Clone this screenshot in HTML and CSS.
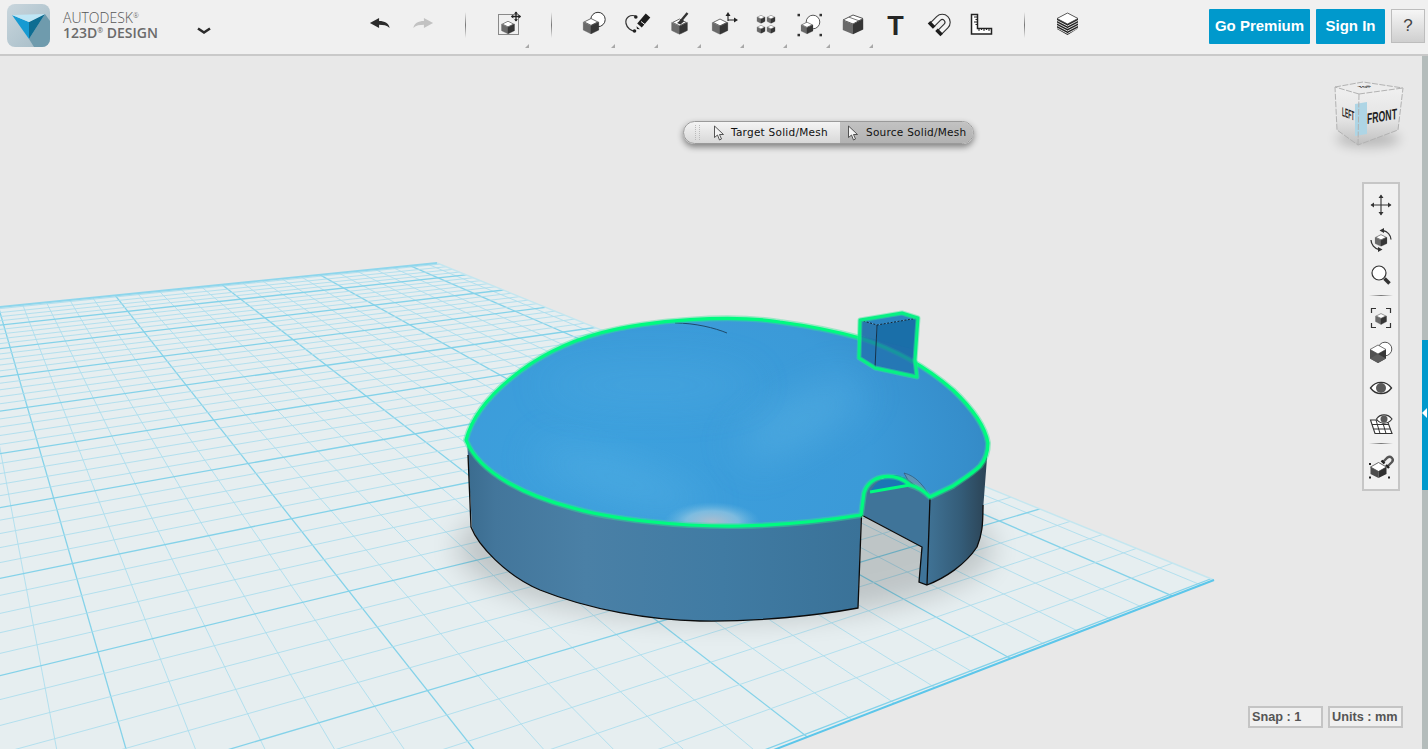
FILE: index.html
```html
<!DOCTYPE html>
<html lang="en">
<head>
<meta charset="utf-8">
<title>Autodesk 123D Design</title>
<link rel="stylesheet" href="styles.css">
</head>
<body>
<svg class="defs" width="0" height="0" aria-hidden="true">
  <defs>
    <symbol id="cube" viewBox="0 0 20 20">
      <path d="M10 1.800 18 5.800 10 9.800 2 5.800Z" fill="#fff" stroke="#555" stroke-width="1" stroke-linejoin="round"/>
      <path d="M.8 5.800 10 10.200V19.800L.8 15.200Z" fill="#6a6a6a" stroke="#6a6a6a" stroke-width=".6" stroke-linejoin="round"/>
      <path d="M19.200 5.800 10 10.200V19.800L19.200 15.200Z" fill="#363636" stroke="#363636" stroke-width=".6" stroke-linejoin="round"/>
    </symbol>
    <symbol id="undo" viewBox="0 0 22 12">
      <path d="M0 5.500 10 0V3.200C16 3.200 21 5.500 21.500 11 18.500 8 14.500 7.400 10 7.400V11Z" fill="currentColor"/>
    </symbol>
  </defs>
</svg>

<header class="topbar">
  <div class="brand">
    <svg class="logo" width="43" height="43" viewBox="0 0 43 43">
      <defs>
        <linearGradient id="logoBg" x1="0" y1="0" x2="1" y2="1"><stop offset="0" stop-color="#c9d6dd"/><stop offset="1" stop-color="#a4bbc6"/></linearGradient>
      </defs>
      <rect width="43" height="43" rx="8" fill="url(#logoBg)"/>
      <path d="M38 10 43 17V35A8 8 0 0 1 35 43H27L22 35Z" fill="#6f9bad"/>
      <path d="M5 11 22 18 22 35Z" fill="#169ad2"/>
      <path d="M38 10 22 18 22 35Z" fill="#0e6d92"/>
      <path d="M5 11 38 10 22 18Z" fill="#bfe6f5"/>
    </svg>
    <div class="brand-text">
      <div class="brand-line1">AUTODESK<sup>®</sup></div>
      <div class="brand-line2">123D<sup>®</sup> DESIGN</div>
    </div>
    <svg class="chevron" width="16" height="8" viewBox="0 0 16 8"><path d="M2 1.500 8 5.500 14 1.500" fill="none" stroke="#2b2b2b" stroke-width="2.600"/></svg>
  </div>

  <button class="tool">
    <svg class="ic" viewBox="0 0 31 30"><use href="#undo" x="5" y="6" width="22" height="11" class="dark"/></svg>
  </button>
  <button class="tool">
    <svg class="ic" viewBox="0 0 31 30"><g transform="translate(27 6) scale(-1 1)"><use href="#undo" width="22" height="11" class="faded"/></g></svg>
  </button>
  <span class="sep"></span>

  <button class="tool has-caret">
    <svg class="ic" viewBox="0 0 31 30">
      <rect x="5.500" y="2.500" width="20" height="20" fill="none" stroke="#222" stroke-dasharray="1 1"/>
      <use href="#cube" x="8" y="8" width="14" height="14"/>
      <path d="M23 0V9M18.500 4.500H27.500" stroke="#222" stroke-width="1.300"/>
      <path d="M23-.5 21 1.800H25ZM23 9.500 21 7.200H25ZM18 4.500 20.300 2.500V6.500ZM28 4.500 25.700 2.500V6.500Z" fill="#222"/>
    </svg>
  </button>
  <span class="sep"></span>

  <button class="tool has-caret">
    <svg class="ic" viewBox="0 0 31 30">
      <circle cx="19" cy="7.500" r="7.200" fill="#fff" stroke="#333" stroke-width="1"/>
      <use href="#cube" x="3.500" y="5" width="17" height="17"/>
    </svg>
  </button>
  <button class="tool has-caret">
    <svg class="ic" viewBox="0 0 31 30">
      <path d="M14.500 4.500C8 1.500 3 6 4 11.500 5 16 9 19 13.500 19" fill="none" stroke="#333" stroke-width="1.200"/>
      <circle cx="13.800" cy="5" r="1.800" fill="#222"/><circle cx="12.500" cy="19" r="1.800" fill="#222"/>
      <path d="M26 3.500 17.500 13.500" stroke="#1d1d1d" stroke-width="6"/>
      <path d="M15 17 14.500 14.300 18 17.200Z" fill="#1d1d1d"/>
      <path d="M19 9.500 23.500 13" stroke="#f0f0f0" stroke-width="1"/>
    </svg>
  </button>
  <button class="tool has-caret">
    <svg class="ic" viewBox="0 0 31 30"><g transform="translate(1 0)">
      <use href="#cube" x="5" y="5.500" width="17" height="17"/>
      <path d="M21.500 1 14 10" stroke="#333" stroke-width="2.400"/>
      <path d="M16.500 6.500 11 11 14.500 12.500 18 9.500Z" fill="#333"/>
    </g></svg>
  </button>
  <button class="tool has-caret">
    <svg class="ic" viewBox="0 0 31 30"><g transform="translate(1 0)">
      <use href="#cube" x="2.500" y="5.500" width="17" height="17"/>
      <path d="M19 9V2M19 8H27" stroke="#222" stroke-width="1.100" fill="none"/>
      <path d="M19 0 16.500 4H21.500ZM29 8 25 5.500V10.500Z" fill="#222"/>
    </g></svg>
  </button>
  <button class="tool has-caret">
    <svg class="ic" viewBox="0 0 31 30">
      <use href="#cube" x="5.500" y="2.500" width="9" height="9"/><use href="#cube" x="15.500" y="2.500" width="9" height="9"/>
      <use href="#cube" x="5.500" y="12.500" width="9" height="9"/><use href="#cube" x="15.500" y="12.500" width="9" height="9"/>
    </svg>
  </button>
  <button class="tool has-caret">
    <svg class="ic" viewBox="0 0 31 30"><g transform="translate(1 0)">
      <circle cx="18" cy="10" r="6.800" fill="#fff" stroke="#444" stroke-width=".9"/>
      <use href="#cube" x="5.500" y="8.500" width="13" height="14"/>
      <rect x="2.500" y="1.800" width="2.500" height="2.500" fill="#333"/><rect x="24.500" y="1.800" width="2.500" height="2.500" fill="#333"/>
      <rect x="2.500" y="21.800" width="2.500" height="2.500" fill="#333"/><rect x="24.500" y="21.800" width="2.500" height="2.500" fill="#333"/>
    </g></svg>
  </button>
  <button class="tool has-caret">
    <svg class="ic" viewBox="0 0 31 30"><g transform="translate(1 0)">
      <path d="M5 8 15 3 25 6.500 15 12Z" fill="#fff" stroke="#555" stroke-linejoin="round"/>
      <path d="M11 5.200 21 8.800" stroke="#555" stroke-width=".8"/>
      <path d="M4.800 8.200 15 12.200V22.300L4.800 18Z" fill="#6a6a6a"/>
      <path d="M25.200 6.800 15 12.200V22.300L25.200 17.500Z" fill="#363636"/>
    </g></svg>
  </button>
  <button class="tool"><span class="t-glyph">T</span></button>
  <button class="tool">
    <svg class="ic" viewBox="0 0 31 30">
      <path d="M9 13 15.500 6.500A5.300 5.300 0 0 1 23 14L16.500 20.500" fill="none" stroke="#333" stroke-width="6.400"/>
      <path d="M9 13 15.500 6.500A5.300 5.300 0 0 1 23 14L16.500 20.500" fill="none" stroke="#f4f4f4" stroke-width="4.200"/>
      <path d="M6 10.300 11.200 15.500M13.500 17.800 18.700 23" stroke="#1d1d1d" stroke-width="3.600"/>
    </svg>
  </button>
  <button class="tool">
    <svg class="ic" viewBox="0 0 31 30">
      <path d="M5.500 2.500H11.500V16.500H25.500V22H5.500Z" fill="#fff" stroke="#222" stroke-width="1.500"/>
      <path d="M8 5H11M9.500 7.500H11M8 10H11M9.500 12.500H11M13 19V16.500M15.500 18V16.500M18 19V16.500M20.500 18V16.500M23 19V16.500" stroke="#222" stroke-width="1"/>
    </svg>
  </button>
  <span class="sep"></span>
  <button class="tool">
    <svg class="ic" viewBox="0 0 31 30">
      <path d="M15.500 1 26 6.500V16.500L15.500 23 5 17V6.500Z" fill="#222"/>
      <path d="M5 8.500 15.500 14 26 8.500M5 11 15.500 16.500 26 11M5 13.500 15.500 19 26 13.500M5 16 15.500 21.500 26 16" fill="none" stroke="#eee" stroke-width=".9"/>
      <path d="M15.500 1 26 6.500 15.500 12 5 6.500Z" fill="#fff" stroke="#444" stroke-width=".8"/>
    </svg>
  </button>

  <div class="account">
    <a class="cta">Go Premium</a>
    <a class="cta">Sign In</a>
    <button class="help">?</button>
  </div>
</header>

<main class="viewport">
  <svg class="scene" width="1428" height="693" viewBox="0 56 1428 693">
    <defs>
      <clipPath id="planeClip"><path d="M-300 337 437 263 1214 580-300 1163Z"/></clipPath>
      <filter id="blur14" x="-30%" y="-60%" width="160%" height="220%"><feGaussianBlur stdDeviation="14"/></filter>
      <filter id="blur20" x="-50%" y="-80%" width="200%" height="260%"><feGaussianBlur stdDeviation="20"/></filter>
      <filter id="blur6" x="-50%" y="-100%" width="200%" height="300%"><feGaussianBlur stdDeviation="6"/></filter>
      <linearGradient id="wallFront" gradientUnits="userSpaceOnUse" x1="468" y1="0" x2="860" y2="0">
        <stop offset="0" stop-color="#3b6c8f"/><stop offset=".07" stop-color="#43769b"/><stop offset=".3" stop-color="#4a80a6"/><stop offset=".65" stop-color="#407ba3"/><stop offset="1" stop-color="#3a7298"/>
      </linearGradient>
      <linearGradient id="wallRight" gradientUnits="userSpaceOnUse" x1="930" y1="0" x2="986" y2="0">
        <stop offset="0" stop-color="#3f7193"/><stop offset=".55" stop-color="#345c78"/><stop offset="1" stop-color="#2c4456"/>
      </linearGradient>
      <radialGradient id="domeFill" gradientUnits="userSpaceOnUse" cx="610" cy="455" r="420" gradientTransform="translate(0 150) scale(1 .67)">
        <stop offset="0" stop-color="#3da1de"/><stop offset=".62" stop-color="#3b9ad8"/><stop offset=".85" stop-color="#368ecb"/><stop offset="1" stop-color="#3283bd"/>
      </radialGradient>
      <radialGradient id="glow"><stop offset="0" stop-color="#d9c8c8" stop-opacity=".72"/><stop offset=".55" stop-color="#bcd8e4" stop-opacity=".5"/><stop offset="1" stop-color="#7cc4e4" stop-opacity="0"/></radialGradient>
      <clipPath id="domeClip"><path d="M466 440C476 400 530 352 600 333 650 320 730 314 780 322 810 326 835 331 860 338 900 351 930 370 953 390 972 408 985 425 988 443 988 452 985 460 980 466 972 474 960 481 953 486L930 497C922 489 918 483 908 479 896 472 870 476 864 493L861 515C830 520 790 525 740 526 680 527 610 519 573 508 530 497 480 475 466 440Z"/></clipPath>
    </defs>

    <path class="plane" d="M-300 337 437 263 1214 580-300 1163Z"/>
    <g id="grid" clip-path="url(#planeClip)"></g>
    <path class="edge-back" d="M0 307 437 263"/>
    <path class="edge-right" d="M437 263 1214 580"/>
    <path class="edge-front" d="M1214 580 740 763"/>

    <ellipse class="shadow" cx="725" cy="548" rx="268" ry="72" filter="url(#blur14)"/>

    <path class="box-left" d="M860 320 877 325 875 368 859 358Z"/>
    <path class="box-right" d="M877 325 918 318 915 360 917 377 875 368Z"/>
    <path class="box-top" d="M860 320 902 313 918 318 877 325Z"/>

    <path class="wall-inner" d="M862 515 922 547 919 582 927 585 931 497 908 476 870 480 862 495Z"/>
    <path class="wall-right" d="M930 497 927 585C945 578 965 565 977 547 982 535 983 525 983 510L988 445Z"/>
    <path class="wall-front" d="M467 440 472 527C478 545 505 575 540 590 590 610 650 620 700 621 760 622 820 615 858 608L861 515Z"/>
    <path class="edge-black" d="M468 455 471 527C478 545 505 575 540 590 590 610 650 620 700 621 760 622 820 615 858 608L861.500 515 922 547 919 582 927 585C945 578 965 565 977 547 982 535 983 525 983 505M930 498 927 585"/>

    <path class="dome" d="M466 440C476 400 530 352 600 333 650 320 730 314 780 322 810 326 835 331 860 338 900 351 930 370 953 390 972 408 985 425 988 443 988 452 985 460 980 466 972 474 960 481 953 486L930 497C922 489 918 483 908 479 896 472 870 476 864 493L861 515C830 520 790 525 740 526 680 527 610 519 573 508 530 497 480 475 466 440Z"/>
    <g clip-path="url(#domeClip)">
      <ellipse class="streak" cx="800" cy="420" rx="70" ry="22" filter="url(#blur20)" transform="rotate(-30 800 420)"/>
      <ellipse class="streak" cx="620" cy="480" rx="90" ry="16" filter="url(#blur20)" transform="rotate(18 620 480)"/>
      <ellipse class="streak soft" cx="650" cy="385" rx="110" ry="22" filter="url(#blur20)"/>
      <ellipse fill="url(#glow)" cx="712" cy="522" rx="48" ry="20"/>
    </g>
    <path class="hairline" d="M675 323C695 323 715 328 727 333"/>

    <path class="crescent" d="M870 492C876 480 889 474 897 475 904 476 909 481 911 485Z"/>
    <path class="notch-lip" d="M904 473C916 476 924 486 930 497 923 491 915 485 908 480Z"/>

    <path class="rim-glow" d="M466 440C476 400 530 352 600 333 650 320 730 314 780 322 810 326 835 331 860 338 900 351 930 370 953 390 972 408 985 425 988 443 988 452 985 460 980 466 972 474 960 481 953 486L930 497C925 492 918 487 910 485 897 472 870 473 864 493L861 515C830 520 790 525 740 526 680 527 610 519 573 508 530 497 480 475 466 440Z"/>
    <path class="rim" d="M466 440C476 400 530 352 600 333 650 320 730 314 780 322 810 326 835 331 860 338 900 351 930 370 953 390 972 408 985 425 988 443 988 452 985 460 980 466 972 474 960 481 953 486L930 497C925 492 918 487 910 485 897 472 870 473 864 493L861 515C830 520 790 525 740 526 680 527 610 519 573 508 530 497 480 475 466 440Z"/>
    <path class="rim thin" d="M870 492 910 485"/>

    <path class="box-veil" d="M859 335 877 340 875 368 859 358Z"/>
    <path class="box-veil" d="M877 340 916 350 915 360 917 377 875 368Z"/>
    <path class="box-lines" d="M877 325 875 368"/>
    <path class="box-dash" d="M860 320 877 325 918 318"/>
    <path class="box-outline-glow" d="M860 320 902 313 918 318 915 360 917 377 875 368 859 358Z"/>
    <path class="box-outline" d="M860 320 902 313 918 318 915 360 917 377 875 368 859 358Z"/>
  </svg>

  <div class="pill">
    <span class="grip"></span>
    <span class="pill-seg">
      <svg class="cursor" width="12" height="16" viewBox="0 0 12 16"><path d="M1.500 1V12.500L4.500 10 6.500 15 8.500 14 6.500 9.500H10.500Z" fill="#f4f4f4" stroke="#444" stroke-width=".9" stroke-linejoin="round"/></svg>
      Target Solid/Mesh
    </span>
    <span class="pill-seg active">
      <svg class="cursor" width="12" height="16" viewBox="0 0 12 16"><path d="M1.500 1V12.500L4.500 10 6.500 15 8.500 14 6.500 9.500H10.500Z" fill="#f4f4f4" stroke="#444" stroke-width=".9" stroke-linejoin="round"/></svg>
      Source Solid/Mesh
    </span>
  </div>

  <svg class="viewcube" width="80" height="80" viewBox="0 0 80 80">
    <defs>
      <linearGradient id="cubeFace" x1="0" y1="0" x2="0" y2="1"><stop offset="0" stop-color="#f0f0f0"/><stop offset=".55" stop-color="#e4e4e4"/><stop offset="1" stop-color="#bfbfbf"/></linearGradient>
    </defs>
    <ellipse class="cube-shadow" cx="38" cy="64" rx="32" ry="8" filter="url(#blur6)"/>
    <path class="cube-top" d="M5 12 33 7 73 13 29 19Z"/>
    <path class="cube-face" d="M5 12 29 19 28 70 7 55Z"/>
    <path class="cube-face" d="M73 13 29 19 28 70 68 55Z"/>
    <path class="cube-strip" d="M25 29 37 27V59L25 61Z"/>
    <path class="cube-dash" d="M5 12 33 7 73 13 68 55 28 70 7 55ZM29 19 5 12M29 19 73 13M29 19 28 70"/>
    <text class="cube-label" transform="matrix(.58 -.1 0 1 37 49)">FRONT</text>
    <text class="cube-label small" transform="matrix(.38 .14 0 1 12 41)">LEFT</text>
    <text class="cube-label tiny" transform="matrix(.9 -.05 .6 .35 30 13)">TOP</text>
  </svg>

  <nav class="navbar">
    <button class="nav-item"><svg viewBox="0 0 26 26" class="nav-ic">
      <path d="M13 3.500V22.500M3.500 13H22.500" stroke="#333" stroke-width="1.100"/>
      <path d="M13 2.500 10.500 6H15.500ZM13 23.500 10.500 20H15.500ZM2.500 13 6 10.500V15.500ZM23.500 13 20 10.500V15.500Z" fill="#333"/>
    </svg></button>
    <button class="nav-item"><svg viewBox="0 0 26 26" class="nav-ic">
      <use href="#cube" x="6.500" y="6.500" width="13" height="13"/>
      <path d="M15 3.500A10 10 0 0 1 23 12.500M11 22.500A10 10 0 0 1 3 13" fill="none" stroke="#333" stroke-width="1.300"/>
      <path d="M11.500 3.500 16 1V6ZM14.500 22.500 10 20V25Z" fill="#333"/>
    </svg></button>
    <button class="nav-item"><svg viewBox="0 0 26 26" class="nav-ic">
      <circle cx="11" cy="11" r="7" fill="#fff" stroke="#333" stroke-width="1.200"/>
      <path d="M16.500 16.500 21.500 21.500" stroke="#333" stroke-width="3.600"/>
    </svg></button>
    <span class="nav-sep"></span>
    <button class="nav-item"><svg viewBox="0 0 26 26" class="nav-ic">
      <path d="M8 3.500H3.500V8M18 3.500H22.500V8M8 22.500H3.500V18M18 22.500H22.500V18" fill="none" stroke="#333" stroke-width="1.200"/>
      <use href="#cube" x="7" y="7" width="12" height="13"/>
    </svg></button>
    <button class="nav-item"><svg viewBox="0 0 26 26" class="nav-ic">
      <circle cx="17" cy="9" r="6.800" fill="#fff" stroke="#444" stroke-width=".9"/>
      <path d="M10 5 18 9.500 10 14 2 9.500Z" fill="#fff" stroke="#555" stroke-width=".8"/>
      <path d="M2 9.500 10 14V23L2 18.500Z" fill="#505050"/>
      <path d="M18 9.500 10 14V23L18 18.500Z" fill="#383838"/>
      <path d="M2 18.500 10 14 18 18.500 10 23Z" fill="#5c5c5c"/>
    </svg></button>
    <button class="nav-item"><svg viewBox="0 0 26 26" class="nav-ic">
      <path d="M2.500 13C8 5.500 18 5.500 23.500 13 18 20.500 8 20.500 2.500 13Z" fill="#fff" stroke="#333" stroke-width="1.300"/>
      <circle cx="13" cy="13" r="5" fill="#5a5a5a"/>
    </svg></button>
    <button class="nav-item"><svg viewBox="0 0 26 26" class="nav-ic">
      <path d="M2.500 10H19L24 23.500H7Z" fill="#fff" stroke="#333" stroke-width="1.100"/>
      <path d="M4 14.500H21M5.800 19H22.500M8 10 12 23.500M14 10 18 23.500" stroke="#333" stroke-width="1"/>
      <path d="M8.500 9C12 3.500 20 3.500 24 9 20 14.500 12 14.500 8.500 9Z" fill="#fff" stroke="#333" stroke-width="1.100"/>
      <circle cx="16" cy="9" r="3.500" fill="#5a5a5a"/>
    </svg></button>
    <span class="nav-sep"></span>
    <button class="nav-item"><svg viewBox="0 0 26 26" class="nav-ic">
      <path d="M15 9 19.500 4.500A3.200 3.200 0 0 1 24 9L19.500 13.500" fill="none" stroke="#555" stroke-width="2.400"/>
      <path d="M13.500 7.500 16.500 10.500M18 12 21 15" stroke="#222" stroke-width="2.400"/>
      <path d="M10.500 9.500 18.500 14 10.500 18.500 2.500 14Z" fill="#fff" stroke="#444" stroke-width=".8"/>
      <path d="M2.500 14 10.500 18.500V25L2.500 21Z" fill="#4c4c4c"/>
      <path d="M18.500 14 10.500 18.500V25L18.500 21Z" fill="#2f2f2f"/>
      <rect x="1" y="10" width="2" height="2" fill="#222"/><rect x="1" y="23.500" width="2" height="2" fill="#222"/><rect x="20" y="23.500" width="2" height="2" fill="#222"/>
    </svg></button>
  </nav>

  <div class="side-handle"><span class="side-arrow"></span></div>

  <div class="status">
    <span class="status-box">Snap : 1</span>
    <span class="status-box">Units : mm</span>
  </div>
</main>
<script src="grid.js"></script>
</body>
</html>
```

FILE: styles.css
```css
* { box-sizing: border-box; }
html, body { margin: 0; height: 100%; overflow: hidden; }
body { font-family: "Liberation Sans", Arial, sans-serif; background: #e8e8e8; }
.defs { position: absolute; }
button { border: 0; padding: 0; background: none; font: inherit; display: block; }

.topbar {
  display: flex; align-items: flex-start;
  height: 56px; padding-left: 7px;
  background: #f0f0f0; border-bottom: 2px solid #c9c9c9;
}
.brand { display: flex; align-items: flex-start; width: 351px; padding-top: 4px; flex: none; }
.logo { flex: none; }
.brand-text { width: 96px; margin-left: 13px; padding-top: 7px; font-family: "Open Sans", sans-serif; color: #6b6b6b; white-space: nowrap; flex: none; }
.brand-line1 { font-size: 14px; line-height: 14px; font-weight: 300; color: #555; }
.brand-line2 { font-size: 14px; line-height: 16px; font-weight: 600; }
.brand-text sup { font-size: 7px; line-height: 0; vertical-align: 5px; }
.chevron { margin: 23px 0 0 37px; flex: none; }

.tool { position: relative; flex: none; display: flex; align-items: flex-start; width: 43px; height: 54px; padding: 12px 6px 0; }
.ic { display: block; flex: none; width: 31px; height: 30px; overflow: visible; color: #2b2b2b; }
.dark { color: #2b2b2b; }
.faded { color: #c2c2c2; }
.has-caret::after {
  content: ""; position: absolute; right: 1px; top: 44px;
  border-left: 4px solid transparent; border-bottom: 4px solid #a8a8a8;
}
.t-glyph { display: block; width: 31px; margin-top: -1px; font: bold 27px/30px "Liberation Sans", sans-serif; color: #262626; text-align: center; }
.sep {
  flex: none; width: 1px; height: 26px; margin: 12px 21px 0;
  background: linear-gradient(#f0f0f0, #777 50%, #f0f0f0);
}
.account { display: flex; gap: 6px; margin-left: auto; padding: 9px 3px 0 0; }
.cta {
  height: 35px; padding: 0 6px; border-radius: 1px;
  background: #0099cc; color: #fff; font: bold 15px/34px "Liberation Sans", sans-serif; white-space: nowrap;
}
.cta:first-child { width: 101px; text-align: center; padding: 0; }
.cta:nth-child(2) { width: 69px; text-align: center; padding: 0; }
.help {
  width: 34px; height: 34px; border: 1px solid #bdbdbd;
  background: linear-gradient(#f6f6f6, #cfcfcf);
  color: #444; font-size: 17px; text-align: center;
}

.viewport { position: relative; height: 693px; overflow: hidden; background: #e8e8e8; }
.scene { position: absolute; left: 0; top: 0; display: block; }
.plane { fill: #e6eef0; }
.minor { stroke: #addeed; stroke-width: .9; }
.major { stroke: #84d2e9; stroke-width: 1.300; }
.edge-back { stroke: #8ed6ec; stroke-width: 1.800; fill: none; }
.edge-right { stroke: #c4e6ef; stroke-width: 1.500; fill: none; }
.edge-front { stroke: #5cc6ea; stroke-width: 2; fill: none; }
.shadow { fill: #000; opacity: .17; }
.box-left { fill: #2a77af; }
.box-right { fill: #1a6fa9; }
.box-top { fill: #2d84c0; }
.wall-inner { fill: #3f7499; }
.wall-right { fill: url(#wallRight); }
.wall-front { fill: url(#wallFront); }
.edge-black { fill: none; stroke: #0b0b0b; stroke-width: 1.300; }
.dome { fill: url(#domeFill); }
.streak { fill: #66bbe8; opacity: .4; }
.streak.soft { opacity: .18; }
.hairline { fill: none; stroke: #1f4a6a; stroke-width: 1; }
.crescent { fill: #1b76b5; }
.notch-lip { fill: #5f95b8; stroke: #2a4f68; stroke-width: .6; }
.rim { fill: none; stroke: #00fa80; stroke-width: 3.200; stroke-linejoin: round; }
.rim.thin { stroke-width: 3; }
.rim-glow { fill: none; stroke: #2ee894; stroke-opacity: .42; stroke-width: 6; stroke-linejoin: round; }
.box-veil { fill: #1e6eaa; fill-opacity: .72; }
.box-lines { fill: none; stroke: #15324a; stroke-width: 1; }
.box-dash { fill: none; stroke: #0b2233; stroke-width: 1; stroke-dasharray: 2 1.500; }
.box-outline { fill: none; stroke: #07f084; stroke-width: 3; stroke-linejoin: round; }
.box-outline-glow { fill: none; stroke: #2ee894; stroke-opacity: .45; stroke-width: 5; stroke-linejoin: round; }

.pill {
  position: absolute; left: 683px; top: 65px; width: 291px; height: 23px;
  display: flex; border-radius: 12px; border: 1px solid #9a9a9a;
  box-shadow: 0 3px 6px rgba(0,0,0,.45);
  font: 10.500px/21px "DejaVu Sans", sans-serif; letter-spacing: .25px; color: #111;
  background: linear-gradient(#f4f4f4, #d8d8d8);
}
.grip { flex: none; width: 22px; position: relative; }
.grip::after {
  content: ""; position: absolute; left: 11px; top: 3px; bottom: 3px; width: 3px;
  border-left: 1px dotted #bbb; border-right: 1px dotted #bbb;
}
.pill-seg { flex: none; width: 134px; display: flex; align-items: center; gap: 6px; padding-left: 7px; white-space: nowrap; }
.pill-seg.active { width: 133px; padding-left: 7px; gap: 7px; background: linear-gradient(#c2c2c2, #b2b2b2); border-radius: 0 11px 11px 0; }
.cursor { flex: none; }

.viewcube { position: absolute; left: 1330px; top: 19px; overflow: visible; }
.cube-shadow { fill: #000; opacity: .2; }
.cube-top { fill: #ececec; }
.cube-face { fill: url(#cubeFace); }
.cube-strip { fill: #aed5e5; }
.cube-dash { fill: none; stroke: #b2b2b2; stroke-width: 1; stroke-dasharray: 6 1.500; }
.cube-label { font: bold 15px "Liberation Sans", sans-serif; fill: #222; }
.cube-label.small { font-size: 13px; }
.cube-label.tiny { font-size: 7px; }

.navbar {
  position: absolute; left: 1362px; top: 126px; width: 38px;
  display: flex; flex-direction: column; align-items: center;
  padding: 3px 0 6px; background: #f0f0f0; border: 2px solid #c6c6c6;
}
.nav-item { width: 34px; height: 35px; display: flex; align-items: center; justify-content: center; }
.nav-ic { width: 26px; height: 26px; display: block; overflow: visible; }
.nav-sep { flex: none; width: 24px; height: 1px; margin: 3px 0 4px; background: linear-gradient(90deg, #f0f0f0, #777 50%, #f0f0f0); }

.side-handle { position: absolute; right: 0; top: 0; bottom: 0; width: 6px; background: #b4bcbb; }
.side-handle::before { content: ""; position: absolute; left: 0; right: 0; top: 284px; height: 150px; background: #0099cc; }
.side-arrow {
  position: absolute; left: 0; top: 352px; z-index: 1;
  border-right: 5px solid #fff; border-top: 5px solid transparent; border-bottom: 5px solid transparent;
}

.status { position: absolute; left: 1248px; top: 650px; display: flex; gap: 5px; }
.status-box {
  width: 75px; height: 22px; padding-left: 2px; background: #f0f0f0; border: 2px solid #c4c4c4;
  font: bold 12.700px/18px "Liberation Sans", sans-serif; color: #555; white-space: nowrap;
}
```

FILE: grid.js
```js
// Draws the perspective ground grid: two pencils of lines, each through a vanishing point.
(function () {
  var NS = 'http://www.w3.org/2000/svg';
  var grid = document.getElementById('grid');
  var V1 = [-74, 56], V2 = [2604, 45];

  function add(x1, y1, x2, y2, major) {
    var l = document.createElementNS(NS, 'line');
    l.setAttribute('x1', x1.toFixed(1));
    l.setAttribute('y1', y1.toFixed(1));
    l.setAttribute('x2', x2.toFixed(1));
    l.setAttribute('y2', y2.toFixed(1));
    l.setAttribute('class', major ? 'major' : 'minor');
    grid.appendChild(l);
  }

  // Lines running away from the viewer, spaced along the back edge.
  for (var k = -1; k <= 75; k++) {
    var x = V2[0] - 1 / (4.558e-4 - 1.8e-5 * (k / 5));
    var y = 307 - 0.1007 * x;
    var t = (900 - V1[1]) / (y - V1[1]);
    add(V1[0], V1[1], V1[0] + (x - V1[0]) * t, 900, k % 5 === 0);
  }

  // Lines running across the view, spaced along the left border of the window.
  for (var j = -4; j <= 45; j++) {
    var y0 = 55.7 + 1 / (3.713e-3 - 0.3e-3 * (j / 5));
    add(-300, y0 + (y0 - V2[1]) * (300 / V2[0]), V2[0], V2[1], j % 5 === 0);
  }
})();
```
